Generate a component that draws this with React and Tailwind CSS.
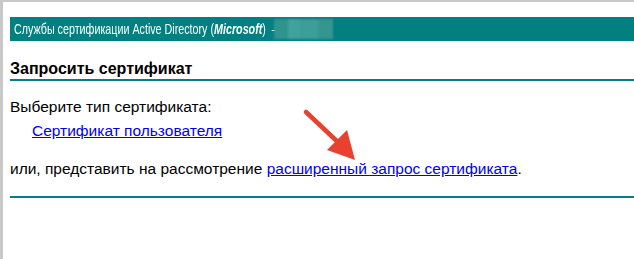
import React from 'react';

export default function App() {
  return (
    <div className="h-[259px] w-[634px] overflow-hidden bg-white border-t-2 border-l-[3px] border-[#c8c8c8] font-['Liberation_Sans',Arial,sans-serif] text-black relative">
      <div className="pl-[7px] pt-[15px]">
        {/* Header bar */}
        <div className="h-[24px] bg-[#008080] flex items-center pl-[4px] text-[15px] text-white">
          <div className="w-[259px] whitespace-nowrap">
            <span className="inline-block origin-left scale-x-[0.715]">
              Службы сертификации Active Directory (<b><i>Microsoft</i></b>)&nbsp; –
            </span>
          </div>
          <span className="ml-[1px] h-[20px] w-[59px] blur-[1px] flex">
            <span className="w-[14px] bg-[#2f948e]" />
            <span className="w-[12px] bg-[#41a29c]" />
            <span className="w-[18px] bg-[#3b9e98]" />
            <span className="flex-1 bg-[#34968f]" />
          </span>
        </div>

        {/* Title */}
        <div className="mt-[19px] border-b-2 border-[#008080] pb-[1px] text-[16px] font-bold leading-[18px]">
          Запросить сертификат
        </div>

        <div className="mt-[17px] text-[15.5px] leading-[18px]">
          <div>Выберите тип сертификата:</div>
          <div className="mt-[6px] pl-[22px]">
            <a href="#" className="text-[#0000ee] underline">Сертификат пользователя</a>
          </div>
          <div className="mt-[20px]">
            или, представить на рассмотрение{' '}
            <a href="#" className="text-[#0000ee] underline">расширенный запрос сертификата</a>.
          </div>
        </div>

        <div className="mt-[18px] h-[2px] bg-[#008080]" />
      </div>

      {/* Red arrow annotation */}
      <svg className="absolute left-[296px] top-[102px]" width="64" height="62" viewBox="0 0 64 62">
        <line x1="7" y1="8" x2="42" y2="41" stroke="#e8412f" strokeWidth="4.5" strokeLinecap="round" />
        <polygon points="56,56 28,46 48,26" fill="#e8412f" />
      </svg>
    </div>
  );
}
